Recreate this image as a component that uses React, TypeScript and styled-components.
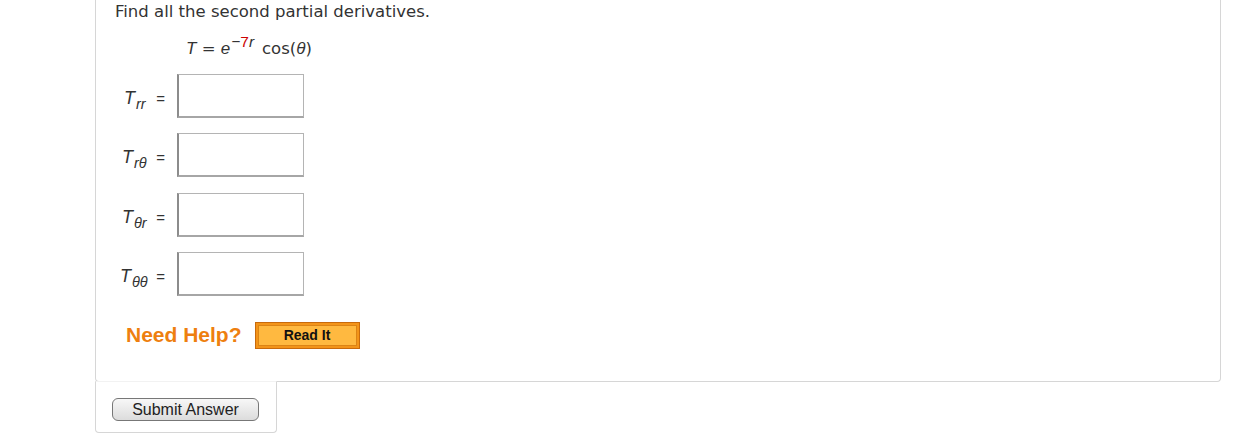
import React from 'react';
import styled, { createGlobalStyle } from 'styled-components';

const GlobalStyle = createGlobalStyle`
  html, body {
    margin: 0;
    padding: 0;
    background: #fff;
  }
  body {
    font-family: "DejaVu Sans", Verdana, sans-serif;
    color: #333;
  }
`;

const Page = styled.div`
  width: 1242px;
  height: 437px;
  overflow: hidden;
  padding-left: 95px;
  box-sizing: border-box;
`;

const QuestionPanel = styled.div`
  width: 1126px;
  height: 382px;
  box-sizing: border-box;
  border: 1px solid #d6d6d6;
  border-top: none;
  border-radius: 0 0 4px 4px;
  padding: 2px 0 0 19px;
  display: flex;
  flex-direction: column;
`;

const Prompt = styled.div`
  font-size: 16.5px;
  line-height: 20px;
  color: #333;
`;

const Equation = styled.div`
  margin: 17px 0 0 71px;
  font-size: 16.5px;
  line-height: 20px;
  color: #333;
  display: flex;
  align-items: baseline;
`;

const MathVar = styled.i`
  font-family: "Liberation Sans", Arial, sans-serif;
  font-style: italic;
  font-size: 17px;
`;

const Sup = styled.sup`
  font-family: "Liberation Sans", Arial, sans-serif;
  font-size: 15.5px;
  font-style: italic;
  position: relative;
  top: -7px;
  vertical-align: baseline;
  margin-left: 1px;
  margin-right: 8px;
`;

const Red = styled.span`
  color: #cc0000;
  font-style: normal;
`;

const Fields = styled.div`
  margin-top: 15px;
  display: flex;
  flex-direction: column;
  gap: 15.3px;
`;

const FieldRow = styled.div`
  display: flex;
  align-items: center;
  height: 44px;
`;

const Label = styled.div<{ $pad: number }>`
  width: 62px;
  display: flex;
  align-items: baseline;
  padding: 5px 0 0 ${(p) => p.$pad}px;
  box-sizing: border-box;
  font-family: "Liberation Sans", Arial, sans-serif;
  color: #333;
`;

const LabelT = styled.span`
  font-style: italic;
  font-size: 18px;
`;

const LabelSub = styled.sub`
  font-style: italic;
  font-size: 14.5px;
  vertical-align: baseline;
  position: relative;
  top: 5px;
  margin-left: 1px;
`;

const Equals = styled.span`
  font-size: 15px;
  margin-left: auto;
  margin-right: 12px;
`;

const AnswerBox = styled.input`
  width: 127px;
  height: 44px;
  box-sizing: border-box;
  border: 1px solid #b4b4b4;
  border-left: 2px solid #8c8c8c;
  border-bottom: 2px solid #a6a6a6;
  background: #fff;
  margin: 0;
  padding: 0 4px;
  font-size: 15px;
  outline: none;
`;

const HelpRow = styled.div`
  margin: 26px 0 0 11px;
  display: flex;
  align-items: center;
  gap: 13px;
`;

const NeedHelp = styled.span`
  font-family: "Liberation Sans", Arial, sans-serif;
  font-weight: bold;
  font-size: 21px;
  color: #ee7f0f;
`;

const ReadItButton = styled.button`
  width: 105px;
  height: 27px;
  box-sizing: border-box;
  border: 1px solid #c86a0c;
  background: #f39419;
  padding: 2px;
  margin: 0;
  display: flex;
  cursor: pointer;
`;

const ReadItInner = styled.span`
  flex: 1;
  display: flex;
  align-items: center;
  justify-content: center;
  background: #ffb940;
  border: 1px solid #dc8415;
  font-family: "Liberation Sans", Arial, sans-serif;
  font-weight: bold;
  font-size: 14px;
  color: #111;
`;

const SubmitTab = styled.div`
  width: 182px;
  height: 52px;
  margin-top: -1px;
  box-sizing: border-box;
  border: 1px solid #d6d6d6;
  border-top: 1px solid #f2f2f2;
  border-radius: 0 0 4px 4px;
  background: #fff;
  position: relative;
  padding: 16px 0 0 16px;
`;

const SubmitButton = styled.button`
  width: 147px;
  height: 23px;
  box-sizing: border-box;
  border: 1px solid #777;
  border-radius: 6px;
  background: linear-gradient(#f7f7f7, #dcdcdc);
  font-family: "Liberation Sans", Arial, sans-serif;
  font-size: 16px;
  color: #222;
  padding: 0;
  cursor: pointer;
`;

const rows = [
  { sub: 'rr', pad: 9 },
  { sub: 'rθ', pad: 7 },
  { sub: 'θr', pad: 7 },
  { sub: 'θθ', pad: 5 },
];

export default function App() {
  return (
    <>
      <GlobalStyle />
      <Page>
        <QuestionPanel>
          <Prompt>Find all the second partial derivatives.</Prompt>
          <Equation>
            <MathVar>T</MathVar>
            <span>&nbsp;=&nbsp;</span>
            <MathVar>e</MathVar>
            <Sup>
              −<Red>7</Red>r
            </Sup>
            <span>cos(</span>
            <MathVar>θ</MathVar>
            <span>)</span>
          </Equation>
          <Fields>
            {rows.map((r) => (
              <FieldRow key={r.sub}>
                <Label $pad={r.pad}>
                  <LabelT>T</LabelT>
                  <LabelSub>{r.sub}</LabelSub>
                  <Equals>=</Equals>
                </Label>
                <AnswerBox type="text" />
              </FieldRow>
            ))}
          </Fields>
          <HelpRow>
            <NeedHelp>Need Help?</NeedHelp>
            <ReadItButton>
              <ReadItInner>Read It</ReadItInner>
            </ReadItButton>
          </HelpRow>
        </QuestionPanel>
        <SubmitTab>
          <SubmitButton>Submit Answer</SubmitButton>
        </SubmitTab>
      </Page>
    </>
  );
}
